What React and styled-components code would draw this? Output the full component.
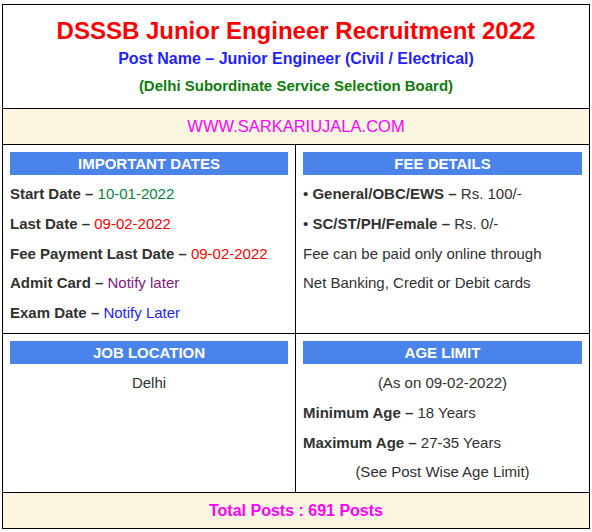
import styled, { createGlobalStyle } from "styled-components";

const GlobalStyle = createGlobalStyle`
    body {
        margin: 0;
        background: #ffffff;
        font-family: 'Liberation Sans', Arial, sans-serif;
        color: #313131;
    }
`;

const dates = [
    { label: 'Start Date', value: '10-01-2022', color: '#0a8540' },
    { label: 'Last Date', value: '09-02-2022', color: '#ff0000' },
    { label: 'Fee Payment Last Date', value: '09-02-2022', color: '#ff0000' },
    { label: 'Admit Card', value: 'Notify later', color: '#7f1a82' },
    { label: 'Exam Date', value: 'Notify Later', color: '#2323ff' },
];

export default function App() {
    return (
        <>
            <GlobalStyle />
            <Table>
                <Header>
                    <Title>DSSSB Junior Engineer Recruitment 2022</Title>
                    <PostName>Post Name – Junior Engineer (Civil / Electrical)</PostName>
                    <Board>(Delhi Subordinate Service Selection Board)</Board>
                </Header>

                <Banner>WWW.SARKARIUJALA.COM</Banner>

                <Row>
                    <Cell>
                        <Bar>IMPORTANT DATES</Bar>
                        <Lines>
                            {dates.map((d) => (
                                <Line key={d.label}>
                                    <Label>{d.label} –</Label> <Value color={d.color}>{d.value}</Value>
                                </Line>
                            ))}
                        </Lines>
                    </Cell>
                    <Cell>
                        <Bar>FEE DETAILS</Bar>
                        <Lines>
                            <Line>• <Label>General/OBC/EWS –</Label> Rs. 100/-</Line>
                            <Line>• <Label>SC/ST/PH/Female –</Label> Rs. 0/-</Line>
                            <Line>Fee can be paid only online through</Line>
                            <Line>Net Banking, Credit or Debit cards</Line>
                        </Lines>
                    </Cell>
                </Row>

                <Row>
                    <Cell>
                        <Bar>JOB LOCATION</Bar>
                        <Lines>
                            <Line center>Delhi</Line>
                        </Lines>
                    </Cell>
                    <Cell>
                        <Bar>AGE LIMIT</Bar>
                        <Lines>
                            <Line center>(As on 09-02-2022)</Line>
                            <Line><Label>Minimum Age –</Label> 18 Years</Line>
                            <Line><Label>Maximum Age –</Label> 27-35 Years</Line>
                            <Line center>(See Post Wise Age Limit)</Line>
                        </Lines>
                    </Cell>
                </Row>

                <Banner bold>Total Posts : 691 Posts</Banner>
            </Table>
        </>
    );
}

const Table = styled.div`
    margin: 4px 0 0 2px;
    width: 588px;
    box-sizing: border-box;
    border: 1px solid #000000;
    display: flex;
    flex-direction: column;
`;

const Header = styled.div`
    display: flex;
    flex-direction: column;
    align-items: center;
    padding: 12px 0 11px;
    font-weight: bold;
`;

const Title = styled.div`
    font-size: 24px;
    line-height: 28px;
    color: #ff0000;
`;

const PostName = styled.div`
    margin-top: 3px;
    font-size: 16px;
    line-height: 22px;
    color: #1f1fff;
`;

const Board = styled.div`
    margin-top: 5px;
    font-size: 15px;
    line-height: 22px;
    color: #0d7d0d;
`;

const Banner = styled.div`
    border-top: 1px solid #000000;
    background-color: #fcf5e0;
    height: 35px;
    line-height: 35px;
    text-align: center;
    font-size: ${props => props.bold ? '16px' : '16.5px'};
    font-weight: ${props => props.bold ? 'bold' : 'normal'};
    color: #ff00ff;
`;

const Row = styled.div`
    display: grid;
    grid-template-columns: 293px 1fr;
    border-top: 1px solid #000000;
`;

const Cell = styled.div`
    padding: 7px 7px 9px;

    &:first-child {
        border-right: 1px solid #000000;
    }
`;

const Bar = styled.div`
    height: 23px;
    line-height: 23px;
    background-color: #4a84ea;
    color: #ffffff;
    font-size: 15px;
    font-weight: bold;
    text-align: center;
`;

const Lines = styled.div`
    display: flex;
    flex-direction: column;
    gap: 7.75px;
    padding-top: 8px;
`;

const Line = styled.div`
    font-size: 15px;
    line-height: 22px;
    white-space: nowrap;
    text-align: ${props => props.center ? 'center' : 'left'};
`;

const Label = styled.strong`
    font-weight: bold;
`;

const Value = styled.span`
    color: ${props => props.color};
`;
